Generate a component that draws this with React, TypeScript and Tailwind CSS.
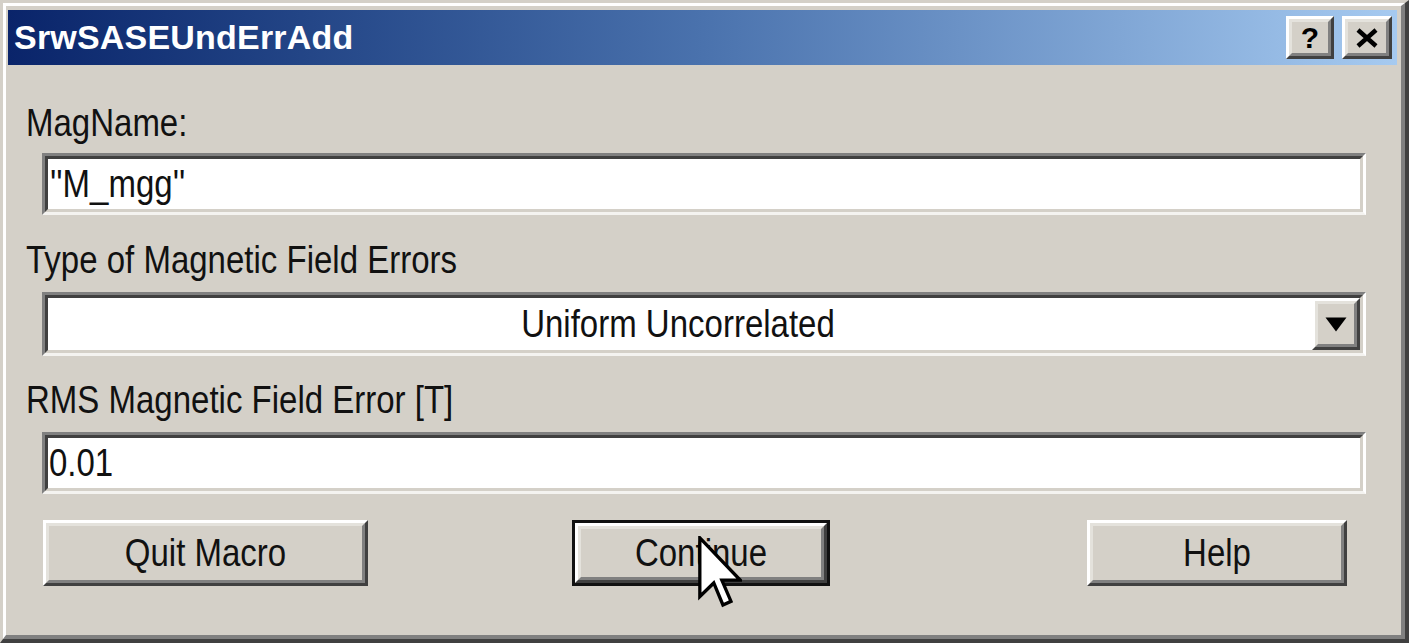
import * as React from 'react'

function Sunken({ className, children }: { className?: string; children?: React.ReactNode }) {
  return (
    <div className={`border-[3px] border-t-[#808080] border-l-[#808080] border-r-white border-b-[#f4f3f0] ${className ?? ''}`}>
      <div className="h-full border-[3px] border-t-[#404040] border-l-[#404040] border-r-[#d4d0c8] border-b-[#d4d0c8] bg-white">
        {children}
      </div>
    </div>
  )
}

function Raised({ className, children }: { className?: string; children?: React.ReactNode }) {
  return (
    <div className={`border-[3px] border-t-white border-l-white border-r-[#404040] border-b-[#404040] bg-[#d4d0c8] ${className ?? ''}`}>
      <div className="h-full border-[3px] border-t-[#e4e2dc] border-l-[#e4e2dc] border-r-[#808080] border-b-[#808080] flex items-center justify-center">
        {children}
      </div>
    </div>
  )
}

function Label({ children, className }: { children: React.ReactNode; className?: string }) {
  return (
    <div className={`pl-[18px] h-[36px] leading-[36px] text-[33px] text-[#111] ${className ?? ''}`}>
      <span className="inline-block scale-y-[1.15] origin-center">{children}</span>
    </div>
  )
}

export default function App() {
  return (
    <div className="w-[1409px] h-[643px] bg-[#d4d0c8] font-['Liberation_Sans',Arial,sans-serif] relative overflow-hidden">
      <div className="h-full border-t-[3px] border-l-[3px] border-r-[4px] border-b-[4px] border-t-[#d4d0c8] border-l-[#d4d0c8] border-r-[#404040] border-b-[#404040]">
        <div className="h-full border-t-[3px] border-l-[3px] border-r-[4px] border-b-[4px] border-t-white border-l-white border-r-[#808080] border-b-[#808080] pt-[4px] pl-[2px] pr-[4px]">
          {/* title bar */}
          <div className="h-[55px] bg-gradient-to-r from-[#0a246a] via-[#4a72ad] to-[#a6caf0] flex items-center justify-between pl-[6px] pr-[5px]">
            <div className="text-white font-bold text-[34px] leading-none pb-[2px] tracking-[0.2px]">SrwSASEUndErrAdd</div>
            <div className="flex gap-[8px] items-center">
              <Raised className="w-[48px] h-[43px]">
                <span className="text-[30px] font-bold leading-none text-black">?</span>
              </Raised>
              <Raised className="w-[50px] h-[43px]">
                <svg width="24" height="20" viewBox="0 0 24 20">
                  <path d="M3 2 L21 18 M21 2 L3 18" stroke="#000" strokeWidth="4.5" />
                </svg>
              </Raised>
            </div>
          </div>

          {/* body */}
          <div className="flex flex-col">
            <Label className="mt-[40px]">MagName:</Label>
            <Sunken className="ml-[34px] w-[1324px] h-[62px] mt-[12px]">
              <div className="h-full flex items-center pl-[2px] text-[33px] text-[#111]">
                <span className="inline-block scale-y-[1.15]">''M_mgg''</span>
              </div>
            </Sunken>

            <Label className="mt-[27px]">Type of Magnetic Field Errors</Label>
            <Sunken className="ml-[34px] w-[1324px] h-[64px] mt-[14px]">
              <div className="h-full flex">
                <div className="flex-1 flex items-center justify-center text-[33px] text-[#111]">
                  <span className="inline-block scale-y-[1.15] pr-[4px]">Uniform Uncorrelated</span>
                </div>
                <Raised className="w-[48px] h-full">
                  <svg width="22" height="15" viewBox="0 0 22 15">
                    <path d="M0.5 0.5 H21.5 L11 14.5 Z" fill="#000" />
                  </svg>
                </Raised>
              </div>
            </Sunken>

            <Label className="mt-[26px]">RMS Magnetic Field Error [T]</Label>
            <Sunken className="ml-[34px] w-[1324px] h-[62px] mt-[14px]">
              <div className="h-full flex items-center pl-[1px] text-[33px] text-[#111]">
                <span className="inline-block scale-y-[1.15]">0.01</span>
              </div>
            </Sunken>

            <div className="flex mt-[26px] h-[66px]">
              <Raised className="ml-[35px] w-[325px] h-full">
                <span className="text-[33px] text-[#111] inline-block scale-y-[1.15]">Quit Macro</span>
              </Raised>
              <div className="ml-[204px] w-[258px] h-full border-[3px] border-[#111]">
                <Raised className="h-full">
                  <span className="text-[33px] text-[#111] inline-block scale-y-[1.15]">Continue</span>
                </Raised>
              </div>
              <Raised className="ml-[257px] w-[260px] h-full">
                <span className="text-[33px] text-[#111] inline-block scale-y-[1.15]">Help</span>
              </Raised>
            </div>
          </div>
        </div>
      </div>

      {/* mouse pointer */}
      <svg className="absolute left-[698px] top-[536px]" width="44" height="80" viewBox="0 0 12 21.8">
        <path d="M0.5 0.5 L0.5 16.5 L4.3 12.8 L6.8 18.8 L9 17.8 L6.5 12 L11.5 12 Z" fill="#fff" stroke="#000" strokeWidth="0.9" strokeLinejoin="miter" />
      </svg>
    </div>
  )
}
